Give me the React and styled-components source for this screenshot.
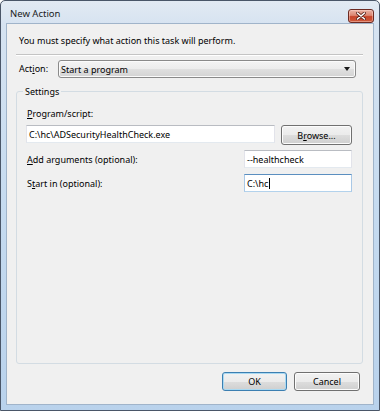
import React from 'react'
import styled, { createGlobalStyle } from "styled-components";

const Global = createGlobalStyle`
    html, body {
        margin: 0;
        padding: 0;
        background: #ffffff;
    }
    * {
        box-sizing: border-box;
    }
`;

const Window = styled.div`
    width: 380px;
    height: 411px;
    display: flex;
    flex-direction: column;
    border: 1px solid #4a5668;
    border-radius: 5px 5px 0 0;
    padding: 0 5px 5px;
    background: linear-gradient(to bottom, #e2eaf3 0px, #d6e3f1 24px, #c6dbf0 200px, #b9d2ec 100%);
    font-family: "Noto Sans", "Open Sans", sans-serif;
    font-size: 9px;
    color: #000;
`;

const TitleBar = styled.div`
    height: 22px;
    display: flex;
    align-items: flex-start;
    justify-content: space-between;
    padding: 7px 0 0 4px;
`;

const Title = styled.span`
    line-height: 14px;
    font-size: 9.5px;
    color: #1b1b1b;
    margin-top: -1px;
`;

const CloseButton = styled.button`
    width: 26px;
    height: 14px;
    padding: 0;
    margin-top: 1px;
    border: 1px solid #6b2a22;
    border-radius: 3px;
    background: linear-gradient(to bottom, #eab3a6 0%, #dc8671 45%, #c7452b 55%, #cf5a3b 100%);
    box-shadow: inset 0 0 0 1px rgba(255, 220, 210, 0.45);
    display: flex;
    align-items: center;
    justify-content: center;
`;

const Client = styled.div`
    flex: 1;
    display: flex;
    flex-direction: column;
    border: 1px solid #a0b4ca;
    background: #f0f0f0;
    padding: 0 10px 13px 9px;
`;

const Instruction = styled.div`
    padding: 10px 0 0 3px;
    line-height: 14px;
`;

const Separator = styled.div`
    margin-top: 6px;
    height: 2px;
    border-top: 1px solid #c4c4c4;
    border-bottom: 1px solid #ffffff;
`;

const ActionRow = styled.div`
    display: flex;
    align-items: center;
    margin-top: 4px;
    padding: 0 7px 0 3px;
`;

const ActionLabel = styled.span`
    width: 39px;
    line-height: 14px;
`;

const Select = styled.div`
    flex: 1;
    height: 18px;
    display: flex;
    align-items: center;
    justify-content: space-between;
    padding: 0 5px 0 2px;
    border: 1px solid #8a8a8a;
    border-radius: 3px;
    background: linear-gradient(to bottom, #f4f4f4 0%, #ececec 50%, #e0e0e0 51%, #d3d3d3 100%);
    box-shadow: inset 0 0 0 1px #fbfbfb;
`;

const GroupBox = styled.fieldset`
    flex: 1;
    margin: 7px 0 0;
    padding: 0 10px 0 9px;
    border: 1px solid #d3dce3;
    border-radius: 3px;
    min-width: 0;
`;

const Legend = styled.legend`
    padding: 0 2px;
    margin-left: -3px;
    line-height: 13px;
`;

const FieldLabel = styled.div`
    line-height: 13px;
    margin-top: ${p => p.$top || 0}px;
    padding-left: 1px;
`;

const Row = styled.div`
    display: flex;
    align-items: ${p => p.$align || "center"};
    justify-content: space-between;
    gap: 6px;
    margin-top: ${p => p.$top || 0}px;
`;

const Input = styled.div`
    flex: ${p => (p.$width ? "none" : 1)};
    width: ${p => (p.$width ? `${p.$width}px` : "auto")};
    height: 18px;
    display: flex;
    align-items: center;
    padding: 0 2px;
    background: #ffffff;
    border: 1px solid;
    border-color: ${p => (p.$focused ? "#5b8fc0 #a9c8e6 #b3d2ec #a9c8e6" : "#b9bcc2 #e2e3ea #e3e9ef #e2e3ea")};
    white-space: nowrap;
    overflow: hidden;
`;

const Caret = styled.span`
    display: inline-block;
    width: 1px;
    height: 11px;
    background: #000;
    margin-left: 1px;
`;

const Button = styled.button`
    width: ${p => p.$width}px;
    height: ${p => p.$height || 19}px;
    padding: 0;
    font-family: inherit;
    font-size: 9px;
    color: #000;
    border: 1px solid ${p => (p.$default ? "#3c7fb1" : "#707070")};
    border-radius: 3px;
    background: linear-gradient(to bottom, #f2f2f2 0%, #ebebeb 50%, #dddddd 51%, #cfcfcf 100%);
    box-shadow: inset 0 0 0 1px ${p => (p.$default ? "#a9d9f2" : "#fcfcfc")};
`;

const Footer = styled.div`
    display: flex;
    justify-content: flex-end;
    gap: 7px;
    margin-top: 8px;
    padding-right: 3px;
`;

const Key = styled.u`
    text-decoration-thickness: 1px;
    text-underline-offset: 1px;
`;

const App = () => {
  return (
    <>
      <Global />
      <Window>
        <TitleBar>
          <Title>New Action</Title>
          <CloseButton>
            <svg width="10" height="8" viewBox="0 0 10 8">
              <path d="M1.5 1 L8.5 7 M8.5 1 L1.5 7" stroke="#5a2018" strokeWidth="3" strokeLinecap="round" />
              <path d="M1.5 1 L8.5 7 M8.5 1 L1.5 7" stroke="#ffffff" strokeWidth="1.6" strokeLinecap="round" />
            </svg>
          </CloseButton>
        </TitleBar>
        <Client>
          <Instruction>You must specify what action this task will perform.</Instruction>
          <Separator />
          <ActionRow>
            <ActionLabel>Act<Key>i</Key>on:</ActionLabel>
            <Select>
              <span>Start a program</span>
              <svg width="6" height="4" viewBox="0 0 6 4">
                <path d="M0 0 H6 L3 4 Z" fill="#1a1a1a" />
              </svg>
            </Select>
          </ActionRow>
          <GroupBox>
            <Legend>Settings</Legend>
            <FieldLabel $top={9}><Key>P</Key>rogram/script:</FieldLabel>
            <Row $align="flex-start" $top={5}>
              <Input>C:\hc\ADSecurityHealthCheck.exe</Input>
              <Button $width={71} $height={20}>B<Key>r</Key>owse...</Button>
            </Row>
            <Row $top={5}>
              <FieldLabel><Key>A</Key>dd arguments (optional):</FieldLabel>
              <Input $width={108}>--healthcheck</Input>
            </Row>
            <Row $top={6}>
              <FieldLabel>S<Key>t</Key>art in (optional):</FieldLabel>
              <Input $width={108} $focused>C:\hc<Caret /></Input>
            </Row>
          </GroupBox>
          <Footer>
            <Button $width={65} $default>OK</Button>
            <Button $width={66}>Cancel</Button>
          </Footer>
        </Client>
      </Window>
    </>
  )
}

export default App
